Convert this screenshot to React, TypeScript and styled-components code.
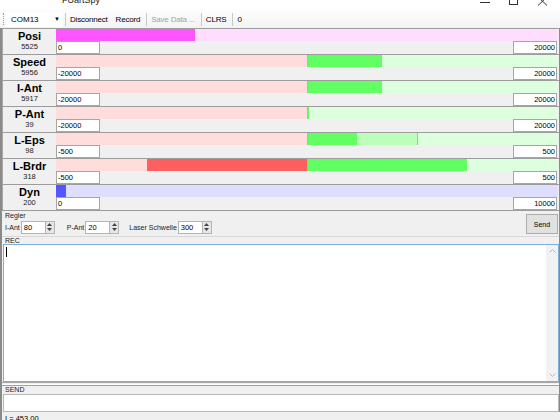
import React from 'react'
import styled, { createGlobalStyle } from 'styled-components'

const GlobalStyle = createGlobalStyle`
  html, body {
    margin: 0;
    padding: 0;
    background: #f0f0f0;
  }
  body {
    font-family: "Liberation Sans", Arial, sans-serif;
    color: #000;
  }
  * { box-sizing: border-box; }
`

const StyledWindow = styled.div`
  width: 560px;
  height: 420px;
  overflow: hidden;
  display: flex;
  flex-direction: column;
  background: #f0f0f0;
`

/* ---------------- title bar ---------------- */
const StyledTitleBar = styled.div`
  height: 10px;
  background: #fff;
  display: flex;
  justify-content: space-between;
  overflow: hidden;
`

const StyledTitle = styled.div`
  font-size: 9px;
  line-height: 9px;
  margin-top: -4px;
  margin-left: 62px;
  color: #222;
`

const StyledCaptionIcons = styled.svg`
  width: 90px;
  height: 10px;
`

/* ---------------- toolbar ---------------- */
const StyledToolbar = styled.div`
  height: 18px;
  display: flex;
  align-items: center;
  background: linear-gradient(#fdfdfd, #f3f3f3);
  font-size: 8px;
`

const StyledGrip = styled.div`
  width: 2px;
  height: 12px;
  margin-left: 3px;
  border-left: 1px dotted #9a9a9a;
`

const StyledCombo = styled.div`
  width: 57px;
  height: 15px;
  margin-left: 1px;
  background: #fff;
  display: flex;
  align-items: center;
  justify-content: space-between;
  padding: 0 3px 0 5px;

  .arrow {
    font-size: 6px;
  }
`

const StyledSeparator = styled.div`
  width: 1px;
  height: 13px;
  background: #c8c8c8;
  margin-left: 2px;
`

const StyledToolButton = styled.div<{ $disabled?: boolean }>`
  padding: 0 4px;
  letter-spacing: -0.2px;
  color: ${props => (props.$disabled ? '#a3a3a3' : '#000')};
  white-space: nowrap;
`

/* ---------------- channel rows ---------------- */
const StyledChannels = styled.div`
  display: flex;
  flex-direction: column;
  border-left: 2px solid #8a8a8a;
  border-right: 1px solid #8a8a8a;
`

const StyledRow = styled.div`
  display: flex;
  height: 26px;
  border-top: 1px solid #9c9c9c;
  border-left: 1px solid #a8a8a8;
`

const StyledLabelCell = styled.div`
  width: 53px;
  display: flex;
  flex-direction: column;
  align-items: center;
`

const StyledName = styled.div`
  font-weight: bold;
  font-size: 11px;
  line-height: 12px;
  margin-top: 1px;
`

const StyledReading = styled.div`
  font-size: 7.5px;
  line-height: 10px;
  color: #222;
`

const StyledTrackCell = styled.div`
  flex: 1;
  display: flex;
  flex-direction: column;
  padding-right: 1px;
`

const StyledBar = styled.div<{ $bg: string }>`
  height: 12px;
  display: flex;
  background: ${props => props.$bg};
`

const StyledHalf = styled.div<{ $bg: string; $neg?: boolean }>`
  flex: 1;
  display: flex;
  position: relative;
  flex-direction: ${props => (props.$neg ? 'row-reverse' : 'row')};
  background: ${props => props.$bg};
  ${props => (props.$neg ? 'border-right: 1px solid #f49a9a;' : '')}
`

const StyledFill = styled.div<{ $color: string }>`
  height: 100%;
  background: ${props => props.$color};
`

const StyledGhost = styled.div`
  position: absolute;
  left: 0;
  top: 0;
  height: 100%;
  background: #bbffbb;
  border-right: 1px solid #66ee66;
`

const StyledLimits = styled.div`
  height: 13px;
  display: flex;
  justify-content: space-between;
  padding-right: 1px;
`

const StyledLimitBox = styled.div<{ $right?: boolean }>`
  width: 44px;
  height: 13px;
  background: #fff;
  border: 1px solid #a6a6a6;
  font-size: 7.5px;
  line-height: 11px;
  padding: 0 1px;
  text-align: ${props => (props.$right ? 'right' : 'left')};
`

/* ---------------- regler ---------------- */
const StyledRegler = styled.div`
  height: 26px;
  display: flex;
  border-top: 1px solid #9c9c9c;
  border-left: 2px solid #8a8a8a;
  border-right: 1px solid #8a8a8a;
  padding-left: 3px;
`

const StyledReglerBody = styled.div`
  flex: 1;
  display: flex;
  flex-direction: column;
`

const StyledSmallLabel = styled.div`
  font-size: 7px;
  line-height: 9px;
  color: #222;
`

const StyledControls = styled.div`
  display: flex;
  align-items: center;
  height: 14px;
`

const StyledField = styled.div<{ $gap: number }>`
  display: flex;
  align-items: center;
  margin-right: ${props => props.$gap}px;

  .caption {
    font-size: 7px;
    margin-right: 1px;
    color: #222;
  }
`

const StyledSpinInput = styled.div`
  width: 24px;
  height: 13px;
  background: #fff;
  border: 1px solid #b4b4b4;
  border-right: none;
  font-size: 7.5px;
  line-height: 11px;
  padding-left: 2px;
`

const StyledSpinButtons = styled.div`
  width: 10px;
  height: 13px;
  display: flex;
  flex-direction: column;
  background: #e6e6e6;
  border: 1px solid #b4b4b4;
  align-items: center;
  justify-content: space-around;
`

const StyledSendButton = styled.div`
  width: 32px;
  height: 20px;
  margin: 3px 1px 0 0;
  background: #e1e1e1;
  border: 1px solid #adadad;
  font-size: 7px;
  display: flex;
  align-items: center;
  justify-content: center;
`

/* ---------------- log areas ---------------- */
const StyledGroup = styled.div`
  display: flex;
  flex-direction: column;
  border-left: 2px solid #8a8a8a;
  border-right: 1px solid #8a8a8a;
`

const StyledGroupLabel = styled.div<{ $lined?: boolean }>`
  height: ${props => (props.$lined ? 9 : 8)}px;
  font-size: 7px;
  line-height: 8px;
  padding-left: 3px;
  color: #222;
  border-top: 1px solid ${props => (props.$lined ? '#a0a0a0' : '#d8d8d8')};
`

const StyledMemo = styled.div`
  height: 138px;
  margin-left: 1px;
  background: #fff;
  border: 1px solid #7eaedd;
  display: flex;
`

const StyledMemoText = styled.div`
  flex: 1;
  padding: 2px 0 0 2px;

  .caret {
    width: 1px;
    height: 10px;
    background: #000;
  }
`

const StyledScrollbar = styled.div`
  width: 12px;
  background: #f2f2f2;
  display: flex;
  flex-direction: column;
  justify-content: space-between;
  align-items: center;
  padding: 4px 0;
`

const StyledDivider = styled.div`
  height: 3px;
  border-top: 1px solid #a8a8a8;
  border-bottom: 1px solid #fff;
`

const StyledSendBox = styled.div`
  height: 18px;
  margin-left: 1px;
  background: #fff;
  border: 1px solid #b8b8b8;
`

const StyledStatus = styled.div`
  height: 8px;
  font-size: 7.5px;
  line-height: 14px;
  padding-left: 3px;
  overflow: visible;
  border-left: 2px solid #8a8a8a;
`

/* ---------------- data ---------------- */
interface ChannelProps {
  name: string
  value: number
  min: number
  max: number
  signed?: boolean
  mirror?: boolean
  ghost?: number
  fill?: string
  track?: string
}

const channels: ChannelProps[] = [
  { name: 'Posi', value: 5525, min: 0, max: 20000, fill: '#ff55ff', track: '#ffddff' },
  { name: 'Speed', value: 5956, min: -20000, max: 20000, signed: true },
  { name: 'I-Ant', value: 5917, min: -20000, max: 20000, signed: true },
  { name: 'P-Ant', value: 39, min: -20000, max: 20000, signed: true },
  { name: 'L-Eps', value: 98, min: -500, max: 500, signed: true, ghost: 221 },
  { name: 'L-Brdr', value: 318, min: -500, max: 500, signed: true, mirror: true },
  { name: 'Dyn', value: 200, min: 0, max: 10000, fill: '#5656ff', track: '#dedeff' },
]

const pct = (v: number, max: number) => `${Math.min(100, (v / max) * 100)}%`

const ChannelBar = ({ ch }: { ch: ChannelProps }) => {
  if (!ch.signed) {
    return (
      <StyledBar $bg={ch.track || '#eee'}>
        <StyledFill $color={ch.fill || '#000'} style={{ width: pct(ch.value - ch.min, ch.max - ch.min) }} />
      </StyledBar>
    )
  }
  const pos = Math.max(0, ch.value)
  const neg = ch.mirror ? Math.abs(ch.value) : Math.max(0, -ch.value)
  return (
    <StyledBar $bg="#ffdddd">
      <StyledHalf $bg="#ffdddd" $neg>
        {neg > 0 && <StyledFill $color="#ff5f5f" style={{ width: pct(neg, ch.max) }} />}
      </StyledHalf>
      <StyledHalf $bg="#ddffdd">
        {ch.ghost && <StyledGhost style={{ width: pct(ch.ghost, ch.max) }} />}
        {pos > 0 && (
          <StyledFill
            $color="#62ff62"
            style={{ width: pct(pos, ch.max), minWidth: 1, position: 'relative' }}
          />
        )}
      </StyledHalf>
    </StyledBar>
  )
}

const Spin = ({ caption, value, gap }: { caption: string; value: number; gap: number }) => (
  <StyledField $gap={gap}>
    <span className="caption">{caption}</span>
    <StyledSpinInput>{value}</StyledSpinInput>
    <StyledSpinButtons>
      <svg width="5" height="3" viewBox="0 0 5 3"><path d="M0 3 L2.5 0 L5 3 Z" fill="#444" /></svg>
      <svg width="5" height="3" viewBox="0 0 5 3"><path d="M0 0 L2.5 3 L5 0 Z" fill="#444" /></svg>
    </StyledSpinButtons>
  </StyledField>
)

const App = () => {
  return (
    <StyledWindow>
      <GlobalStyle />
      <StyledTitleBar>
        <StyledTitle>FUartSpy</StyledTitle>
        <StyledCaptionIcons viewBox="0 0 90 10">
          <line x1="10" y1="2.5" x2="20" y2="2.5" stroke="#333" strokeWidth="1" />
          <rect x="39.5" y="-5" width="8" height="9.5" fill="none" stroke="#333" strokeWidth="1" />
          <path d="M68 -3 L77 5.5 M77 -3 L68 5.5" stroke="#333" strokeWidth="1" />
        </StyledCaptionIcons>
      </StyledTitleBar>

      <StyledToolbar>
        <StyledGrip />
        <StyledCombo>
          <span>COM13</span>
          <span className="arrow">▼</span>
        </StyledCombo>
        <StyledSeparator />
        <StyledToolButton>Disconnect</StyledToolButton>
        <StyledToolButton>Record</StyledToolButton>
        <StyledSeparator />
        <StyledToolButton $disabled>Save Data ...</StyledToolButton>
        <StyledSeparator />
        <StyledToolButton>CLRS</StyledToolButton>
        <StyledSeparator />
        <StyledToolButton>0</StyledToolButton>
      </StyledToolbar>

      <StyledChannels>
        {channels.map(ch => (
          <StyledRow key={ch.name}>
            <StyledLabelCell>
              <StyledName>{ch.name}</StyledName>
              <StyledReading>{ch.value}</StyledReading>
            </StyledLabelCell>
            <StyledTrackCell>
              <ChannelBar ch={ch} />
              <StyledLimits>
                <StyledLimitBox>{ch.min}</StyledLimitBox>
                <StyledLimitBox $right>{ch.max}</StyledLimitBox>
              </StyledLimits>
            </StyledTrackCell>
          </StyledRow>
        ))}
      </StyledChannels>

      <StyledRegler>
        <StyledReglerBody>
          <StyledSmallLabel>Regler</StyledSmallLabel>
          <StyledControls>
            <Spin caption="I-Ant" value={80} gap={12} />
            <Spin caption="P-Ant" value={20} gap={10} />
            <Spin caption="Laser Schwelle" value={300} gap={0} />
          </StyledControls>
        </StyledReglerBody>
        <StyledSendButton>Send</StyledSendButton>
      </StyledRegler>

      <StyledGroup>
        <StyledGroupLabel>REC</StyledGroupLabel>
        <StyledMemo>
          <StyledMemoText>
            <div className="caret" />
          </StyledMemoText>
          <StyledScrollbar>
            <svg width="7" height="4" viewBox="0 0 7 4"><path d="M0.5 3.5 L3.5 0.5 L6.5 3.5" fill="none" stroke="#b8b8b8" /></svg>
            <svg width="7" height="4" viewBox="0 0 7 4"><path d="M0.5 0.5 L3.5 3.5 L6.5 0.5" fill="none" stroke="#b8b8b8" /></svg>
          </StyledScrollbar>
        </StyledMemo>
        <StyledDivider />
        <StyledGroupLabel $lined>SEND</StyledGroupLabel>
        <StyledSendBox />
      </StyledGroup>
      <StyledStatus>I = 453.00</StyledStatus>
    </StyledWindow>
  )
}

export default App
